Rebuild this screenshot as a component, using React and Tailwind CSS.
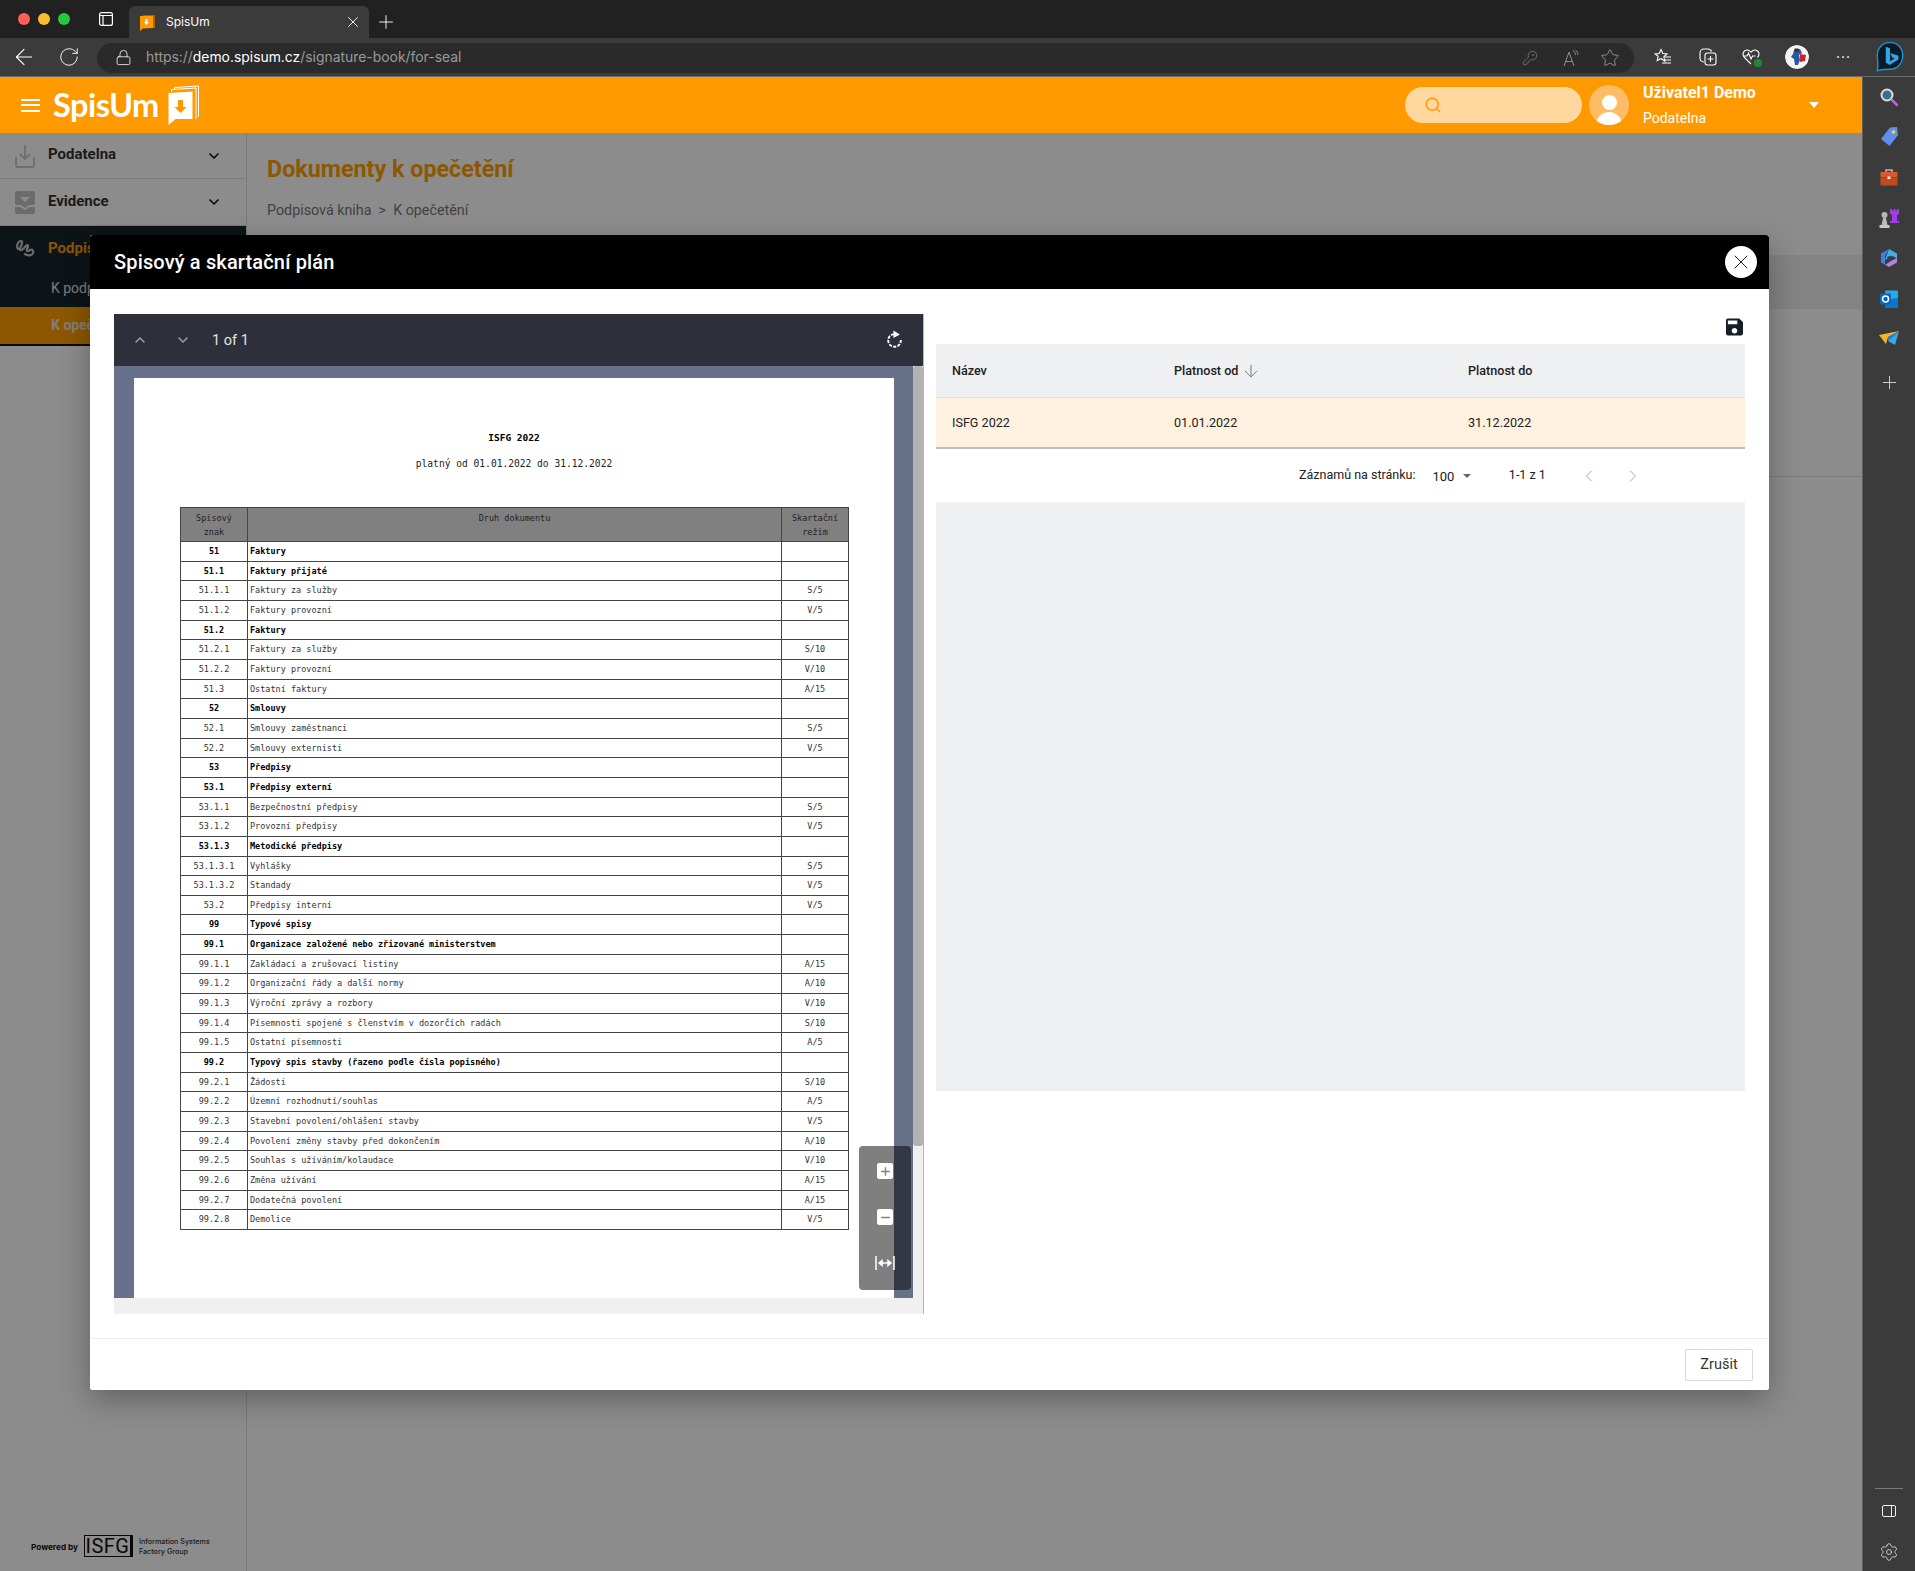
import { ChevronDown, ChevronUp, ChevronLeft, ChevronRight, ArrowLeft, ArrowDown, RotateCw, Lock, X, Plus, Minus, Star, KeyRound, Search, Settings } from 'lucide-react';

const ROWS = [
  ['51', 'Faktury', '', true],
  ['51.1', 'Faktury přijaté', '', true],
  ['51.1.1', 'Faktury za služby', 'S/5'],
  ['51.1.2', 'Faktury provozní', 'V/5'],
  ['51.2', 'Faktury', '', true],
  ['51.2.1', 'Faktury za služby', 'S/10'],
  ['51.2.2', 'Faktury provozní', 'V/10'],
  ['51.3', 'Ostatní faktury', 'A/15'],
  ['52', 'Smlouvy', '', true],
  ['52.1', 'Smlouvy zaměstnanci', 'S/5'],
  ['52.2', 'Smlouvy externisti', 'V/5'],
  ['53', 'Předpisy', '', true],
  ['53.1', 'Předpisy externí', '', true],
  ['53.1.1', 'Bezpečnostní předpisy', 'S/5'],
  ['53.1.2', 'Provozní předpisy', 'V/5'],
  ['53.1.3', 'Metodické předpisy', '', true],
  ['53.1.3.1', 'Vyhlášky', 'S/5'],
  ['53.1.3.2', 'Standady', 'V/5'],
  ['53.2', 'Předpisy interní', 'V/5'],
  ['99', 'Typové spisy', '', true],
  ['99.1', 'Organizace založené nebo zřizované ministerstvem', '', true],
  ['99.1.1', 'Zakládací a zrušovací listiny', 'A/15'],
  ['99.1.2', 'Organizační řády a další normy', 'A/10'],
  ['99.1.3', 'Výroční zprávy a rozbory', 'V/10'],
  ['99.1.4', 'Písemnosti spojené s členstvím v dozorčích radách', 'S/10'],
  ['99.1.5', 'Ostatní písemnosti', 'A/5'],
  ['99.2', 'Typový spis stavby (řazeno podle čísla popisného)', '', true],
  ['99.2.1', 'Žádosti', 'S/10'],
  ['99.2.2', 'Územní rozhodnutí/souhlas', 'A/5'],
  ['99.2.3', 'Stavební povolení/ohlášení stavby', 'V/5'],
  ['99.2.4', 'Povolení změny stavby před dokončením', 'A/10'],
  ['99.2.5', 'Souhlas s užíváním/kolaudace', 'V/10'],
  ['99.2.6', 'Změna užívání', 'A/15'],
  ['99.2.7', 'Dodatečná povolení', 'A/15'],
  ['99.2.8', 'Demolice', 'V/5'],
];

function BookLogo({ className }) {
  return (
    <svg viewBox="0 0 33 40" className={className}>
      <path d="M7 5V2.500L31 1v31" fill="none" stroke="#fff" strokeWidth="1" />
      <path d="M4 7V4.500L28.500 3v31" fill="none" stroke="#fff" strokeWidth="1" />
      <path d="M1 8l24-1.500v27.500L8 34l-7 6z" fill="#fff" />
      <path d="M10.500 15h5v7h3.500l-6 6-6-6h3.500z" fill="#ff9900" />
    </svg>
  );
}

function TabFavicon() {
  return (
    <svg viewBox="0 0 16 18" className="w-[16px] h-[18px]">
      <path d="M3 2h12v13H3z" fill="#a86400" />
      <path d="M0 3h13v12l-10 .5-3 2.500z" fill="#ff9900" />
      <path d="M5.500 6h2v3h1.500l-2.500 3-2.500-3h1.500z" fill="#fff" />
    </svg>
  );
}

function TabsIcon() {
  return (
    <svg viewBox="0 0 14 14" className="w-[14px] h-[14px]" fill="none" stroke="#fff" strokeWidth="1.200">
      <rect x="0.600" y="0.600" width="12.800" height="12.800" rx="2" />
      <path d="M0.600 3.500h12.800M4 3.500v9.900" />
    </svg>
  );
}

function Favorites() {
  return (
    <svg viewBox="0 0 18 18" className="w-[18px] h-[18px]" fill="none" stroke="#fff" strokeWidth="1.100">
      <path d="M7 1.500l1.800 4 4.200.4-3.100 2.900.9 4.400L7 10.500l-3.800 2.200.9-4.400L1 5.900l4.200-.4z" />
      <path d="M11 9h6M11 12h6M8 15h9" />
    </svg>
  );
}

function Collections() {
  return (
    <svg viewBox="0 0 18 18" className="w-[18px] h-[18px]" fill="none" stroke="#fff" strokeWidth="1.100">
      <path d="M5 14c-3 0-4-2-4-4V5c0-2.500 1.500-4 4-4h4c2 0 3 1 3.500 2.500" />
      <rect x="6" y="5" width="11" height="12" rx="2.500" />
      <path d="M11.500 8v6M8.500 11h6" />
    </svg>
  );
}

function HealthIcon() {
  return (
    <div className="relative w-[18px] h-[18px]">
      <svg viewBox="0 0 18 18" className="w-[18px] h-[18px]" fill="none" stroke="#fff" strokeWidth="1.100">
        <path d="M9 16L2.500 9.500C.5 7.500.5 4.500 2.500 3c2-1.500 4.500-1 6.500 1.200C11 2 13.500 1.500 15.500 3c2 1.500 2 4.500 0 6.500" />
        <path d="M1 8h4l1.500-3 2.500 6 1.500-3h3" />
      </svg>
      <div className="absolute right-[-2px] bottom-[-1px] w-[8px] h-[8px] rounded-full bg-[#1d8a2e]" />
    </div>
  );
}

function ReadAloud() {
  return (
    <svg viewBox="0 0 16 18" className="w-[16px] h-[18px]" fill="none" stroke="#8f8f8f" strokeWidth="1">
      <path d="M1 17L6 3l5 14M2.800 12.500h6.400" />
      <path d="M10 1.500c1.500 1 2.500 2.500 2.500 4.500M12.500 1c1.500 1 2.500 3 2.500 5" />
    </svg>
  );
}

function BingLogo() {
  return (
    <svg viewBox="0 0 30 34" className="w-[30px] h-[32px]">
      <path d="M15 1.500C7 1.500 1.500 8 1.500 15c0 6 1.500 11 0 16.500 4-1 8-1.500 13.500-1.500 8 0 13.500-6.500 13.500-14.500S23 1.500 15 1.500z" fill="#0d1a26" stroke="#1597d6" strokeWidth="1.500" />
      <path d="M10.500 6l4.500 1.600v14l5-3-3-1.400-1.500-4.500 8.500 3v4l-9.500 5.800-4-2.600z" fill="#2aa8e8" />
    </svg>
  );
}

function Avatar() {
  return (
    <svg viewBox="0 0 24 24" className="w-[24px] h-[24px] rounded-full">
      <circle cx="12" cy="12" r="12" fill="#f4f4f4" />
      <path d="M9 5l6-1 2 4-3 2 1 5-2 5h-3l-1-6-3-2 2-3z" fill="#2856a8" />
      <path d="M15 9l6 1-1 6-5 1z" fill="#c8232c" />
      <path d="M9.500 3.500h4v3h-4z" fill="#3a2a20" />
    </svg>
  );
}

function EdgeTool({ children }) {
  return <div className="h-[40.300px] flex items-center justify-center shrink-0">{children}</div>;
}

function EdgeSidebar() {
  return (
    <div className="w-[53px] shrink-0 bg-[#3b3b3b] border-l border-[#5d5d5d] flex flex-col items-center">
      <EdgeTool>
        <svg viewBox="0 0 20 20" className="w-[20px] h-[20px]" fill="none">
          <circle cx="8" cy="8" r="5.500" stroke="#d8dee6" strokeWidth="2" fill="#3c6f8f" />
          <path d="M12.500 12.500l6 6" stroke="#c061e0" strokeWidth="2.500" />
        </svg>
      </EdgeTool>
      <EdgeTool>
        <svg viewBox="0 0 20 20" className="w-[20px] h-[20px]">
          <path d="M11 0.500l7-.5 1 8-8.500 11L2 12z" fill="#5f8ff0" />
          <circle cx="14.500" cy="5" r="1.800" fill="#ffd02a" />
        </svg>
      </EdgeTool>
      <EdgeTool>
        <svg viewBox="0 0 20 20" className="w-[20px] h-[20px]">
          <path d="M7 4V2h6v2" fill="none" stroke="#b8b8b8" strokeWidth="1.500" />
          <rect x="1.500" y="4" width="17" height="5.500" fill="#d85a2a" />
          <rect x="1.500" y="10" width="17" height="7.500" fill="#c24a20" />
          <rect x="8.500" y="8.500" width="3" height="2.500" fill="#e8e8e8" />
        </svg>
      </EdgeTool>
      <EdgeTool>
        <svg viewBox="0 0 20 20" className="w-[20px] h-[20px]">
          <path d="M11 1h2v1.500h1.500V1h2v1.500H18V1h2v5l-2 1v6h2v2h-9v-2h2V7l-2-1z" fill="#a03de8" />
          <circle cx="5.500" cy="7" r="3" fill="#b8b8b8" />
          <path d="M4 10h3l1.500 7H2.500z" fill="#b8b8b8" />
          <rect x="0.500" y="17" width="10" height="3" fill="#c8c8c8" />
        </svg>
      </EdgeTool>
      <EdgeTool>
        <svg viewBox="0 0 20 20" className="w-[20px] h-[20px]">
          <path d="M10 1L2 5.500v9l4 2.300V8z" fill="#3f7fe0" />
          <path d="M10 1l8 4.500v5L13.500 8 6 12z" fill="#45b4e8" opacity="0.950" />
          <path d="M18 10v4.500L10 19l-4-2.200 7-4.300z" fill="#b184e4" />
          <path d="M8 9l4-1.500 1 3-4 2z" fill="#3a3a5a" />
        </svg>
      </EdgeTool>
      <EdgeTool>
        <svg viewBox="0 0 20 20" className="w-[20px] h-[20px]">
          <rect x="6" y="1.500" width="13" height="17" rx="1" fill="#28a8ea" />
          <path d="M6 11l13-2v9.500H6z" fill="#0a78c8" />
          <rect x="1" y="4.500" width="11" height="11" rx="1" fill="#0a64b8" />
          <circle cx="6.500" cy="10" r="3" fill="none" stroke="#fff" strokeWidth="1.500" />
        </svg>
      </EdgeTool>
      <EdgeTool>
        <svg viewBox="0 0 20 20" className="w-[20px] h-[20px]">
          <path d="M0 6l20-4-11 6-2 7z" fill="#f5b52a" />
          <path d="M20 2l-4 14-7-4z" fill="#3aa8ea" />
          <path d="M9 8l11-6-11 10z" fill="#1f86d0" />
        </svg>
      </EdgeTool>
      <div className="h-[46px] flex items-center justify-center">
        <Plus className="w-[21px] h-[21px] text-[#e0e0e0]" strokeWidth={1} />
      </div>
      <div className="mt-auto w-[28px] h-px bg-[#7a7a7a]" />
      <div className="h-[44px] w-full flex items-center justify-center">
        <svg viewBox="0 0 14 12" className="w-[14px] h-[12px]" fill="none" stroke="#f0f0f0" strokeWidth="1">
          <rect x="0.500" y="0.500" width="13" height="11" rx="1.500" />
          <path d="M9.500 0.500v11" />
        </svg>
      </div>
      <div className="h-[38px] w-full flex items-center justify-center">
        <Settings className="w-[20px] h-[20px] text-[#e0e0e0]" strokeWidth={1} />
      </div>
    </div>
  );
}

function BrowserChrome() {
  return (
    <>
      <div className="h-[38px] shrink-0 bg-[#212121] flex items-end font-['Inter',sans-serif]">
        <div className="w-[129px] h-full flex items-center pl-[18px] shrink-0">
          <div className="w-[12px] h-[12px] rounded-full bg-[#ff5f57]" />
          <div className="w-[12px] h-[12px] rounded-full bg-[#febc2e] ml-[8px]" />
          <div className="w-[12px] h-[12px] rounded-full bg-[#28c840] ml-[8px]" />
          <div className="ml-[29px]"><TabsIcon /></div>
        </div>
        <div className="w-[240px] h-[32px] bg-[#3b3b3b] rounded-t-[6px] flex items-center pl-[11px] pr-[7px] shrink-0">
          <TabFavicon />
          <span className="ml-[10px] text-[12px] text-white">SpisUm</span>
          <X className="ml-auto w-[18px] h-[18px] text-white" strokeWidth={1.200} />
        </div>
        <div className="h-[32px] flex items-center ml-[6px]">
          <Plus className="w-[22px] h-[22px] text-white" strokeWidth={1} />
        </div>
      </div>
      <div className="h-[39px] shrink-0 bg-[#3b3b3b] border-b border-[#6b6b6b] flex items-center pl-[11px] pr-[10px] font-['Inter',sans-serif]">
        <ArrowLeft className="w-[26px] h-[26px] text-white" strokeWidth={1} />
        <RotateCw className="ml-[21px] w-[22px] h-[22px] text-white" strokeWidth={1} />
        <div className="ml-[17px] flex-1 h-[30px] mt-[1px] bg-[#2a2a2a] rounded-[15px] flex items-center pl-[18px] pr-[14px]">
          <Lock className="w-[17px] h-[17px] text-white" strokeWidth={1.100} />
          <span className="ml-[14px] text-[13.900px] text-[#9a9a9a]">https://<span className="text-white">demo.spisum.cz</span>/signature-book/for-seal</span>
          <KeyRound className="ml-auto w-[16px] h-[16px] text-[#8a8a8a]" strokeWidth={1} />
          <div className="ml-[25px]"><ReadAloud /></div>
          <Star className="ml-[21px] w-[20px] h-[20px] text-[#a0a0a0]" strokeWidth={1} />
        </div>
        <div className="ml-[20px]"><Favorites /></div>
        <div className="ml-[27px]"><Collections /></div>
        <div className="ml-[25px]"><HealthIcon /></div>
        <div className="ml-[25px]"><Avatar /></div>
        <span className="ml-[27px] w-[14px] text-center text-white text-[14px] leading-none tracking-[1px]">···</span>
        <div className="ml-[25px]"><BingLogo /></div>
      </div>
    </>
  );
}

function AppHeader() {
  return (
    <div className="h-[56px] shrink-0 bg-[#ff9900] flex items-center pl-[21px] pr-[43px] text-white">
      <div className="flex flex-col gap-[3.500px] w-[19px]">
        <div className="h-[2px] bg-white" />
        <div className="h-[2px] bg-white" />
        <div className="h-[2px] bg-white" />
      </div>
      <span className="ml-[13px] w-[107px] text-[32.500px] leading-none font-bold font-['Lato',sans-serif] tracking-[-0.5px]">SpisUm</span>
      <BookLogo className="ml-[7px] w-[34px] h-[40px]" />
      <div className="ml-auto w-[177px] h-[36px] rounded-[18px] bg-[#ffd89f] flex items-center pl-[19px]">
        <Search className="w-[18px] h-[18px] text-[#ff9900]" strokeWidth={2} />
      </div>
      <div className="ml-[7px] w-[40px] h-[40px] rounded-full bg-[#ffbc66] overflow-hidden flex flex-col items-center">
        <div className="mt-[10px] w-[15px] h-[16px] rounded-full bg-white" />
        <div className="mt-[2px] w-[26px] h-[14px] rounded-t-full bg-white" />
      </div>
      <div className="ml-[14px] w-[166px]">
        <div className="text-[16px] leading-[18px] font-bold">Uživatel1 Demo</div>
        <div className="mt-[7px] text-[14px] leading-[18px]">Podatelna</div>
      </div>
      <div className="w-0 h-0 border-x-[5.500px] border-x-transparent border-t-[6px] border-t-white" />
    </div>
  );
}

function SideNav() {
  return (
    <div className="w-[247px] shrink-0 bg-white border-r border-[#e0e0e0] flex flex-col">
      <div className="h-[46px] border-b border-[#dedede] flex items-center pl-[15px] pr-[24px]">
        <svg viewBox="0 0 20 24" className="w-[20px] h-[24px]" fill="none" stroke="#c8c8c8" strokeWidth="1.800">
          <path d="M10 1v13M5 10l5 5 5-5M1 13v8.500c0 .8.500 1.500 1.500 1.500h15c1 0 1.500-.7 1.500-1.500V13" />
        </svg>
        <span className="ml-[13px] mb-[2px] text-[15px] font-bold text-[#333]">Podatelna</span>
        <ChevronDown className="ml-auto w-[16px] h-[16px] text-[#111]" strokeWidth={2.500} />
      </div>
      <div className="h-[47px] border-b border-[#dedede] flex items-center pl-[15px] pr-[24px]">
        <svg viewBox="0 0 20 24" className="w-[20px] h-[24px]" fill="#c4c4c4">
          <path d="M2 1h16c1 0 2 1 2 2v10c0 1-1 2-2 2h-4l-4 3-4-3H2c-1 0-2-1-2-2V3c0-1 1-2 2-2zm3 6l5 5 5-5z" fillRule="evenodd" />
          <path d="M0 17h5l5 3 5-3h5v5c0 1-1 2-2 2H2c-1 0-2-1-2-2z" />
        </svg>
        <span className="ml-[13px] mb-[2px] text-[15px] font-bold text-[#333]">Evidence</span>
        <ChevronDown className="ml-auto w-[16px] h-[16px] text-[#111]" strokeWidth={2.500} />
      </div>
      <div className="bg-[#16262b] border-b-2 border-[#111]">
        <div className="h-[44px] flex items-center pl-[15px]">
          <svg viewBox="0 0 20 18" className="w-[20px] h-[18px]" fill="none" stroke="#c4c4c4" strokeWidth="2.200" strokeLinecap="round">
            <path d="M3 10C1 7 3 2 6 2C8 2 7 6 5 9C4 11 6 12 8 10L11 7C13 5 14 7 12 10C11 12 13 13 15 11C17 10 19 11 18 14C17 17 12 17 10 15" />
          </svg>
          <span className="ml-[13px] text-[15px] font-bold text-[#ff9900]">Podpisová kniha</span>
        </div>
        <div className="h-[37px] flex items-center pl-[51px] text-[14px] text-[#e0e0e0]">K podpisu</div>
        <div className="h-[37px] flex items-center pl-[51px] bg-[#ff9f00] text-[14px] font-bold text-[#e8e8e8]">K opečetění</div>
      </div>
      <div className="mt-auto h-[36px] flex pl-[31px] text-[#111]">
        <span className="text-[8.200px] font-bold leading-[24px] font-['Inter',sans-serif]">Powered by</span>
        <div className="ml-[6px] w-[49px] h-[22px] border border-[#111] border-r-[3px] flex items-center justify-center text-[20px] leading-none tracking-[0.5px]">ISFG</div>
        <div className="ml-[6px] text-[7.200px] leading-[10px] font-medium text-[#333] font-['Inter',sans-serif] pt-[2px]">
          <div>Information Systems</div>
          <div>Factory Group</div>
        </div>
      </div>
    </div>
  );
}

function PageBehind() {
  return (
    <div className="flex-1 bg-white flex flex-col">
      <div className="pl-[20px] h-[122px] shrink-0">
        <h1 className="pt-[21px] text-[23.300px] leading-[30px] font-bold text-[#ff9f00]">Dokumenty k opečetění</h1>
        <div className="mt-[17px] text-[14.300px] text-[#777] leading-[18px]">Podpisová kniha &nbsp;&gt;&nbsp; K opečetění</div>
      </div>
      <div className="h-[54px] bg-[#eeeeee] shrink-0" />
      <div className="h-[168px] border-b border-[#e0e0e0] shrink-0" />
    </div>
  );
}

function PdfTable() {
  return (
    <div className="mx-[46px] mt-[37px] border-t border-l border-[#444] w-[669px] font-['DejaVu_Sans_Mono',monospace] text-[8.500px]">
      <div className="flex h-[34px] bg-[#808080] border-b border-[#444] text-[#222] leading-[14px] text-center">
        <div className="w-[67px] border-r border-[#444] pt-[3px]">Spisový<br />znak</div>
        <div className="flex-1 border-r border-[#444] pt-[3px]">Druh dokumentu</div>
        <div className="w-[67px] border-r border-[#444] pt-[3px]">Skartační<br />režim</div>
      </div>
      {ROWS.map(([code, name, mode, bold]) => (
        <div key={code} className={`flex h-[19.660px] border-b border-[#444] leading-[18px] ${bold ? 'font-bold text-black' : 'text-[#333]'}`}>
          <div className="w-[67px] border-r border-[#444] text-center">{code}</div>
          <div className="flex-1 border-r border-[#444] pl-[2px] whitespace-pre">{name}</div>
          <div className="w-[67px] border-r border-[#444] text-center font-normal">{mode}</div>
        </div>
      ))}
    </div>
  );
}

function PdfViewer() {
  return (
    <div className="w-[810px] h-[1000px] border-r border-[#b5b5b5] flex flex-col relative">
      <div className="h-[52px] shrink-0 bg-[#2d303a] flex items-center pl-[18px] pr-[20px] text-[#e4e4e4]">
        <ChevronUp className="w-[16px] h-[16px] text-[#a0a4ad]" strokeWidth={2} />
        <ChevronDown className="ml-[27px] w-[16px] h-[16px] text-[#a0a4ad]" strokeWidth={2} />
        <span className="ml-[21px] mt-[2px] text-[14.500px]">1 of 1</span>
        <svg viewBox="0 0 16 18" className="ml-auto mb-[2px] w-[17px] h-[19px]" fill="none" stroke="#fff" strokeWidth="1.800">
          <path d="M11.500 5A6 6 0 1 0 14 9.500" strokeDasharray="3 1.200" />
          <path d="M7 0.500l6 3.800-6 3.200z" fill="#fff" stroke="none" />
        </svg>
      </div>
      <div className="flex-1 flex min-h-0">
        <div className="flex-1 flex flex-col min-w-0">
          <div className="flex-1 bg-[#67718a] pt-[12px] pl-[20px] pr-[19px] min-h-0">
            <div className="h-full bg-white overflow-hidden">
              <div className="pt-[54px] text-center text-[9.500px] font-bold font-['DejaVu_Sans_Mono',monospace] text-black leading-[12px]">ISFG 2022</div>
              <div className="mt-[14px] text-center text-[9.600px] font-['DejaVu_Sans_Mono',monospace] text-[#222] leading-[12px]">platný od 01.01.2022 do 31.12.2022</div>
              <PdfTable />
            </div>
          </div>
          <div className="h-[16px] shrink-0 bg-[#f0f0f0]" />
        </div>
        <div className="w-[10px] shrink-0 bg-[#f0f0f0]">
          <div className="h-[780px] bg-[#b3b3b3] rounded-[3px]" />
        </div>
      </div>
      <div className="absolute left-[745px] top-[832px] w-[52px] h-[144px] rounded-[4px] bg-black/50 flex flex-col items-center text-white">
        <div className="mt-[17px] w-[16px] h-[16px] rounded-[2px] bg-white flex items-center justify-center">
          <Plus className="w-[13px] h-[13px] text-[#808080]" strokeWidth={2.500} />
        </div>
        <div className="mt-[30px] w-[16px] h-[16px] rounded-[2px] bg-white flex items-center justify-center">
          <Minus className="w-[13px] h-[13px] text-[#808080]" strokeWidth={2.500} />
        </div>
        <svg viewBox="0 0 20 14" className="mt-[31px] w-[20px] h-[14px]" fill="none" stroke="#fff" strokeWidth="1.500">
          <path d="M1 0v14M19 0v14M4 7h12" />
          <path d="M4 7l3-2.500v5zM16 7l-3-2.500v5z" fill="#fff" />
        </svg>
      </div>
    </div>
  );
}

function PlanTable() {
  return (
    <div className="ml-[12px] w-[809px] flex flex-col text-[12.600px] text-[#222]">
      <div className="h-[30px] flex justify-end items-start pt-[4px] pr-[2px]">
        <svg viewBox="3 3 18 18" className="w-[17px] h-[18px]" fill="#13202a">
          <path d="M17 3H5c-1.110 0-2 .9-2 2v14c0 1.100.89 2 2 2h14c1.100 0 2-.9 2-2V7l-4-4zm-5 16c-1.660 0-3-1.340-3-3s1.340-3 3-3 3 1.340 3 3-1.340 3-3 3zm3-10H5V5h10v4z" />
        </svg>
      </div>
      <div className="h-[54px] bg-[#eff0f2] border-b border-[#dfe0e2] flex items-center pl-[16px] pt-[1px] font-medium">
        <div className="w-[222px]">Název</div>
        <div className="w-[294px] flex items-center">
          Platnost od
          <ArrowDown className="ml-[3px] w-[20px] h-[20px] text-[#666]" strokeWidth={1} />
        </div>
        <div>Platnost do</div>
      </div>
      <div className="h-[51px] bg-[#fff1e0] border-b-2 border-[#bdbdbd] flex items-center pl-[16px] pt-[1px]">
        <div className="w-[222px]">ISFG 2022</div>
        <div className="w-[294px]">01.01.2022</div>
        <div>31.12.2022</div>
      </div>
      <div className="h-[53px] flex items-center pl-[363px] text-[12.500px]">
        <span>Záznamů na stránku:</span>
        <span className="ml-[17px] mt-[2px] text-[13px]">100</span>
        <div className="ml-[8.500px] w-0 h-0 border-x-[4px] border-x-transparent border-t-[4px] border-t-[#666]" />
        <span className="ml-[38px]">1-1 z 1</span>
        <ChevronLeft className="ml-[33px] w-[20px] h-[20px] text-[#aaa]" strokeWidth={1.200} />
        <ChevronRight className="ml-[24px] w-[20px] h-[20px] text-[#aaa]" strokeWidth={1.200} />
      </div>
      <div className="h-[589px] bg-[#eff0f2]" />
    </div>
  );
}

function Modal() {
  return (
    <div className="absolute left-[90px] top-[158px] w-[1679px] h-[1155px] bg-white rounded-[2px] shadow-[0_10px_30px_rgba(0,0,0,0.3)] flex flex-col z-10">
      <div className="h-[54px] shrink-0 bg-black rounded-t-[3px] flex items-center pl-[24px] pr-[12px]">
        <h2 className="text-[20px] font-medium text-white tracking-[0.15px]">Spisový a skartační plán</h2>
        <div className="ml-auto w-[32px] h-[32px] rounded-full bg-white flex items-center justify-center">
          <X className="w-[24px] h-[24px] text-[#222]" strokeWidth={1} />
        </div>
      </div>
      <div className="flex-1 flex pl-[24px] pt-[25px] min-h-0">
        <PdfViewer />
        <PlanTable />
      </div>
      <div className="h-[52px] shrink-0 border-t border-[#eeeeee] flex items-start justify-end pr-[16px] pt-[10px]">
        <div className="w-[68px] h-[32px] border border-[#d8d8d8] rounded-[2px] flex items-center justify-center text-[14.500px] text-[#333]">Zrušit</div>
      </div>
    </div>
  );
}

export default function App() {
  return (
    <div className="w-[1915px] h-[1571px] overflow-hidden flex flex-col font-['Roboto',sans-serif]">
      <BrowserChrome />
      <div className="flex-1 flex min-h-0">
        <div className="flex-1 flex flex-col relative min-w-0">
          <AppHeader />
          <div className="flex-1 flex relative min-h-0">
            <SideNav />
            <PageBehind />
            <div className="absolute inset-0 bg-black/45" />
          </div>
          <Modal />
        </div>
        <EdgeSidebar />
      </div>
    </div>
  );
}
